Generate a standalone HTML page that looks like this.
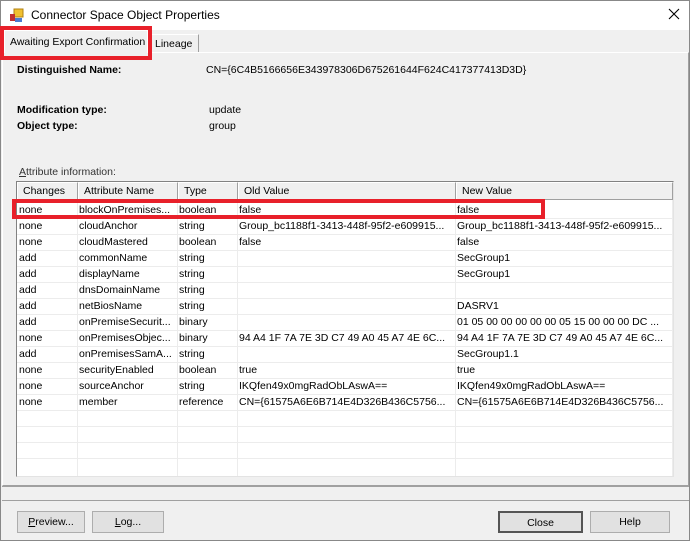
<!DOCTYPE html>
<html><head><style>
*{margin:0;padding:0;box-sizing:border-box}
body{width:690px;height:541px;background:#f0f0f0;font-family:"Liberation Sans",sans-serif;font-size:10.5px;color:#000;position:relative;overflow:hidden}
.a{position:absolute;white-space:nowrap}
.title{left:0;top:0;width:690px;height:30px;background:#fff;border:1px solid #888;border-bottom:none}
.btn{position:absolute;height:22px;border:1px solid #adadad;background:#e1e1e1;text-align:center;line-height:20px;font-size:10.5px}
.grid{left:16px;top:181px;width:658px;height:296px;background:#fff;border:1px solid #828282;border-right-color:#e3e3e3;border-bottom-color:#e3e3e3}
.hd{position:absolute;top:0;height:18px;background:#f0f0f0;border:1px solid #fff;border-right-color:#a0a0a0;border-bottom-color:#a0a0a0;padding-left:5px;line-height:16px}
.vl{position:absolute;top:18px;bottom:0;width:1px;background:#ececec}
.hl{position:absolute;left:0;right:0;height:1px;background:#ececec}
.c{position:absolute;height:16px;line-height:16px;overflow:hidden}
.red{position:absolute;border:4px solid #e8202a}
</style></head><body>
<div class="a title"></div>
<div class="a" style="left:0;top:0;width:1px;height:541px;background:#888"></div>
<div class="a" style="right:0;top:0;width:1px;height:541px;background:#888"></div>
<div class="a" style="left:0;bottom:0;width:690px;height:1px;background:#888"></div>
<svg class="a" style="left:9px;top:8px" width="16" height="16"><rect x="5" y="1" width="9" height="8" fill="#f0c030" stroke="#b08010"/><rect x="1" y="6" width="5" height="7" fill="#c03030"/><rect x="6" y="10" width="7" height="4" fill="#4a7ad0"/></svg>
<div class="a" style="left:31px;top:8px;font-size:12px">Connector Space Object Properties</div>
<svg class="a" style="left:668px;top:8px" width="12" height="12"><path d="M1 1L11 11M11 1L1 11" stroke="#000" stroke-width="1.1"/></svg>
<div class="a" style="left:2px;top:52px;width:687px;height:434px;border:1px solid #fff;border-right-color:#a0a0a0;border-bottom-color:#a0a0a0"></div>
<div class="a" style="left:4px;top:30px;width:144px;height:23px;background:#f0f0f0;border:1px solid #fff;border-bottom:none"></div>
<div class="a" style="left:10px;top:36px">Awaiting Export Confirmation</div>
<div class="a" style="left:150px;top:34px;width:49px;height:18px;border:1px solid #fff;border-right-color:#a0a0a0;border-bottom:none"></div>
<div class="a" style="left:155px;top:38px">Lineage</div>
<div class="red" style="left:0;top:26px;width:152px;height:34px"></div>
<div class="a" style="left:17px;top:64px;font-weight:bold">Distinguished Name:</div>
<div class="a" style="left:206px;top:64px">CN={6C4B5166656E343978306D675261644F624C417377413D3D}</div>
<div class="a" style="left:17px;top:104px;font-weight:bold">Modification type:</div>
<div class="a" style="left:209px;top:104px">update</div>
<div class="a" style="left:17px;top:120px;font-weight:bold">Object type:</div>
<div class="a" style="left:209px;top:120px">group</div>
<div class="a" style="left:19px;top:166px;color:#333"><u>A</u>ttribute information:</div>
<div class="a grid">
<div class="hd" style="left:0;width:61px">Changes</div>
<div class="hd" style="left:61px;width:100px">Attribute Name</div>
<div class="hd" style="left:161px;width:60px">Type</div>
<div class="hd" style="left:221px;width:218px">Old Value</div>
<div class="hd" style="left:439px;width:217px">New Value</div>
<div class="vl" style="left:60px"></div><div class="vl" style="left:160px"></div><div class="vl" style="left:220px"></div><div class="vl" style="left:438px"></div><div class="vl" style="left:655px"></div>
<div id="rows"></div>
</div>
<div class="red" style="left:12px;top:199px;width:533px;height:20px"></div>
<div class="a" style="left:2px;top:486px;width:687px;height:1px;background:#a0a0a0"></div>
<div class="a" style="left:2px;top:500px;width:687px;height:1px;background:#a0a0a0"></div>
<div class="btn" style="left:17px;top:511px;width:68px"><u>P</u>review...</div>
<div class="btn" style="left:92px;top:511px;width:72px"><u>L</u>og...</div>
<div class="btn" style="left:498px;top:511px;width:85px;border:2px solid #555">Close</div>
<div class="btn" style="left:590px;top:511px;width:80px">Help</div>
<script>
var d=[["none","blockOnPremises...","boolean","false","false"],["none","cloudAnchor","string","Group_bc1188f1-3413-448f-95f2-e609915...","Group_bc1188f1-3413-448f-95f2-e609915..."],["none","cloudMastered","boolean","false","false"],["add","commonName","string","","SecGroup1"],["add","displayName","string","","SecGroup1"],["add","dnsDomainName","string","",""],["add","netBiosName","string","","DASRV1"],["add","onPremiseSecurit...","binary","","01 05 00 00 00 00 00 05 15 00 00 00 DC ..."],["none","onPremisesObjec...","binary","94 A4 1F 7A 7E 3D C7 49 A0 45 A7 4E 6C...","94 A4 1F 7A 7E 3D C7 49 A0 45 A7 4E 6C..."],["add","onPremisesSamA...","string","","SecGroup1.1"],["none","securityEnabled","boolean","true","true"],["none","sourceAnchor","string","IKQfen49x0mgRadObLAswA==","IKQfen49x0mgRadObLAswA=="],["none","member","reference","CN={61575A6E6B714E4D326B436C5756...","CN={61575A6E6B714E4D326B436C5756..."]];
var L=[2,62,162,222,440],W=[58,98,58,216,214],h="";
for(var i=0;i<16;i++){var t=20+i*16;h+='<div class="hl" style="top:'+(t+16)+'px"></div>';if(i<d.length)for(var j=0;j<5;j++)h+='<div class="c" style="left:'+L[j]+'px;top:'+t+'px;width:'+W[j]+'px">'+d[i][j]+'</div>';}
document.getElementById("rows").innerHTML=h;
</script>
</body></html>
